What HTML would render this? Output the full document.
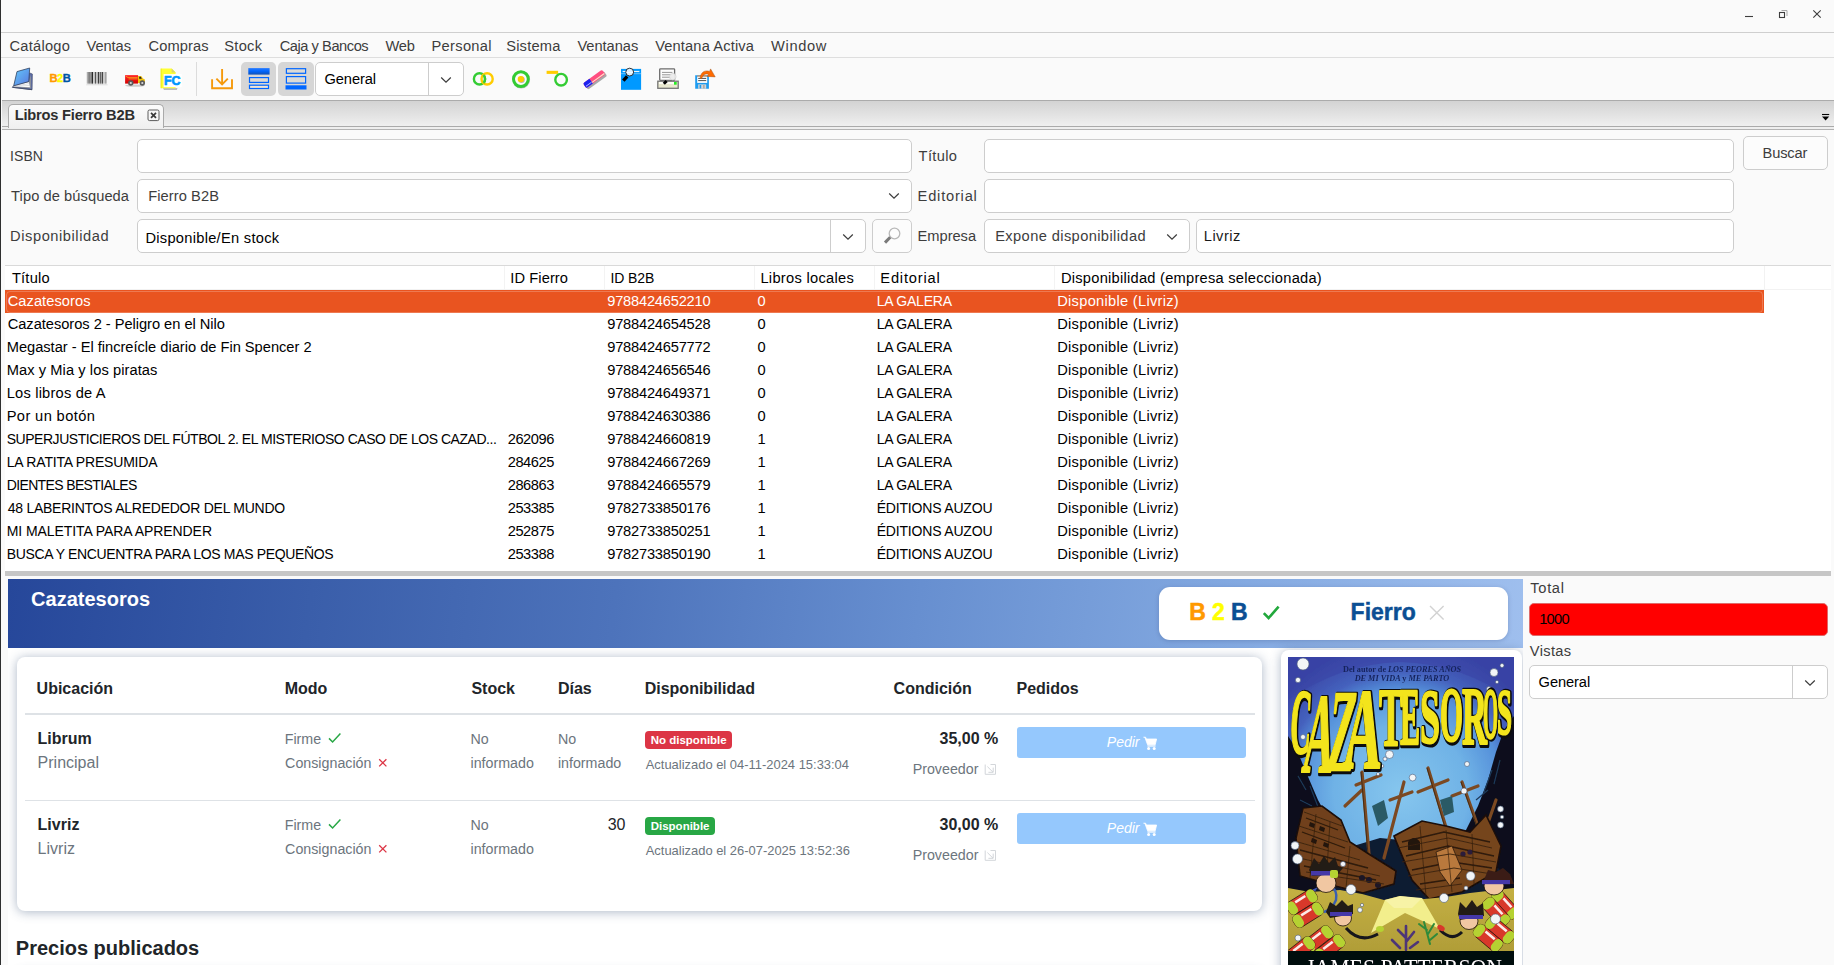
<!DOCTYPE html>
<html><head><meta charset="utf-8"><title>Libros Fierro B2B</title>
<style>
*{box-sizing:border-box;margin:0;padding:0}
html,body{width:1834px;height:965px;overflow:hidden;background:#fafafa;font-family:"Liberation Sans",sans-serif}
#app{position:relative;width:1834px;height:965px;overflow:hidden;background:#fafafa}
.a{position:absolute}
.t{position:absolute;white-space:nowrap;line-height:20px;height:20px}
.inp{position:absolute;background:#fff;border:1px solid #cdcdcd;border-radius:5px}
.hl{position:absolute;height:1px}
svg{position:absolute;overflow:visible}
.w{position:absolute;white-space:nowrap;font-family:"Liberation Sans",sans-serif}
</style></head><body><div id="app">
<div class="hl" style="left:0;top:32px;width:1834px;background:#cfcfcf"></div>
<div class="hl" style="left:0;top:57px;width:1834px;background:#dedede"></div>
<svg style="left:1740px;top:6px" width="90" height="16" viewBox="1740 6 90 16"><path d="M1745 16.5 H1753" stroke="#3d3d3d" stroke-width="1.1"/><path d="M1781.5 10.5 H1787 V16" fill="none" stroke="#a8a8a8" stroke-width="1"/><rect x="1779.5" y="12.5" width="5" height="5" fill="#fafafa" stroke="#3d3d3d" stroke-width="1.1"/><path d="M1813.3 10.3 L1820.7 17.7 M1820.7 10.3 L1813.3 17.7" stroke="#3d3d3d" stroke-width="1.1"/></svg>
<div class="a" style="left:196px;top:62px;width:1px;height:34px;background:#dcdcdc"></div>
<div class="a" style="left:241px;top:62px;width:35px;height:34px;background:#d6d6d6;border-radius:5px"></div>
<div class="a" style="left:278px;top:62px;width:36px;height:34px;background:#d6d6d6;border-radius:5px"></div>
<div class="inp" style="left:315px;top:62px;width:149px;height:34px"></div>
<div class="a" style="left:428px;top:63px;width:1px;height:32px;background:#cdcdcd"></div>
<svg style="left:440px;top:76px" width="12" height="8" viewBox="0 0 12 8"><path d="M1.2 1.5 L6 6.2 L10.8 1.5" fill="none" stroke="#3d3d3d" stroke-width="1.2"/></svg>
<svg style="left:0;top:60px" width="740" height="40" viewBox="0 60 740 40"><defs><linearGradient id="bk" x1="0" y1="0" x2="1" y2="1"><stop offset="0" stop-color="#62cafc"/><stop offset="1" stop-color="#5a78de"/></linearGradient><linearGradient id="bar1" x1="0" y1="0" x2="0" y2="1"><stop offset="0" stop-color="#2a7cff"/><stop offset="0.45" stop-color="#0066ff"/><stop offset="1" stop-color="#1150b4"/></linearGradient><linearGradient id="bc" x1="0" y1="0" x2="0" y2="1"><stop offset="0" stop-color="#fff" stop-opacity="0"/><stop offset="0.8" stop-color="#fafafa" stop-opacity="0"/><stop offset="1" stop-color="#fafafa" stop-opacity="0.85"/></linearGradient><linearGradient id="rd" x1="0" y1="0" x2="0" y2="1"><stop offset="0" stop-color="#ff2a2a"/><stop offset="1" stop-color="#d40000"/></linearGradient></defs><path d="M29.9 73 L32.4 74 L32.1 89.7 L12.3 87.3 L13.7 85.7 Z" fill="#5a6aa8" stroke="#3f4a66" stroke-width="0.6"/><path d="M13.9 85.8 L28.8 81.6 L31 74.4 L31.2 88.6 L13 86.9 Z" fill="#8a8f9a"/><path d="M14.5 85.8 L28.8 81.9 L30 87.3 L13.4 86.6 Z" fill="#ffffff"/><path d="M14.3 86 L29.5 83.6 M13.8 86.5 L29.8 85.4" stroke="#b9bcc4" stroke-width="0.5" fill="none"/><path d="M17 71.6 L29.7 68 L28.8 81.6 L13.7 85.8 Z" fill="url(#bk)" stroke="#34435f" stroke-width="0.8" stroke-linejoin="round"/><path d="M12.4 87.3 L32 89.7" stroke="#3f4a66" stroke-width="0.9"/><text x="49.4" y="81.8" font-family="Liberation Sans, sans-serif" font-weight="bold" font-size="11.2" letter-spacing="-0.45" stroke-width="0.35"><tspan fill="#ff9900" stroke="#ff9900">B</tspan><tspan fill="#ffff00" stroke="#ffff00">2</tspan><tspan fill="#0055a4" stroke="#0055a4">B</tspan></text><rect x="86.8" y="72" width="1.0" height="12.3" fill="#9a9a9a"/><rect x="88.4" y="72" width="1.3" height="12.3" fill="#4a4a4a"/><rect x="90.2" y="72" width="0.8" height="12.3" fill="#7a7a7a"/><rect x="91.4" y="72" width="1.6" height="12.3" fill="#2a2a2a"/><rect x="93.6" y="72" width="0.8" height="12.3" fill="#8a8a8a"/><rect x="94.9" y="72" width="1.2" height="12.3" fill="#555"/><rect x="96.6" y="72" width="0.7" height="12.3" fill="#8a8a8a"/><rect x="97.8" y="72" width="1.5" height="12.3" fill="#3a3a3a"/><rect x="99.8" y="72" width="1.2" height="12.3" fill="#666"/><rect x="101.5" y="72" width="1.6" height="12.3" fill="#444"/><rect x="103.6" y="72" width="0.9" height="12.3" fill="#999"/><rect x="105.0" y="72" width="1.6" height="12.3" fill="#a5a5a5"/><rect x="86" y="72" width="22" height="13" fill="url(#bc)"/><path d="M86.2 84.8 H107.6" stroke="#cfcfcf" stroke-width="0.6"/><ellipse cx="135" cy="85.6" rx="10" ry="1.2" fill="#000" opacity="0.18"/><rect x="125.1" y="75.1" width="13" height="8.5" fill="url(#rd)"/><path d="M126 76.2 L128 77.6 H137.6 M128.6 78.9 H137.6" stroke="#ffd21a" stroke-width="0.6" fill="none"/><path d="M138 76 L141.2 76 L143 78.6 L144.9 79.6 L144.9 83.1 L138 83.1 Z" fill="#f2c20c"/><path d="M139.2 76.8 L140.8 76.8 L141.8 78.8 L139.2 78.8 Z" fill="#222"/><circle cx="130.8" cy="83" r="2.7" fill="#5a5a5a"/><circle cx="130.8" cy="83" r="1.1" fill="#d8d8d8"/><circle cx="142.3" cy="83" r="2.7" fill="#5a5a5a"/><circle cx="142.3" cy="83" r="1.1" fill="#d8d8d8"/><path d="M163 88.4 H177.5 L176.8 89.6 H164 Z" fill="#555" opacity="0.75"/><path d="M161 68.6 H171.6 L175.6 72.6 V88.2 H161 Z" fill="#ffff33"/><path d="M171.6 68.6 L175.6 72.6 H171.6 Z" fill="#d9d66a"/><path d="M161 68.6 V88.2" stroke="#e6e600" stroke-width="0.8"/><rect x="163.6" y="74.1" width="18.2" height="13.1" fill="#fff"/><text x="163.9" y="85.3" font-family="Liberation Sans, sans-serif" font-weight="bold" font-size="12.4" fill="#0096ff" stroke="#0096ff" stroke-width="0.65" letter-spacing="0.1">FC</text><path d="M222.1 69 V84.2 M216.4 78.6 L222.1 84.4 L227.8 78.6 M212.1 79.2 V88.2 H232 V79.2" fill="none" stroke="#f5990b" stroke-width="1.9"/><rect x="248.3" y="68.1" width="21.3" height="6.5" fill="url(#bar1)"/><rect x="249.5" y="77.6" width="19" height="4.8" fill="#dcdad6" stroke="#0066ff" stroke-width="1.2"/><rect x="249.5" y="85.2" width="19" height="3.3" fill="#f3e6d3" stroke="#0066ff" stroke-width="1.2"/><rect x="286.4" y="68.7" width="19.2" height="4.6" fill="#dcdad6" stroke="#0066ff" stroke-width="1.2"/><rect x="286.4" y="76.6" width="19.2" height="6.5" fill="#dcdad6" stroke="#0066ff" stroke-width="1.2"/><rect x="285.5" y="85.3" width="21" height="4.2" fill="#0066ff"/><circle cx="479.5" cy="78.9" r="5.6" fill="none" stroke="#33cc33" stroke-width="2.4"/><circle cx="487.1" cy="78.9" r="5.6" fill="none" stroke="#ffcc00" stroke-width="2.4"/><path d="M 483.3 74.8 A 5.6 5.6 0 0 1 483.3 83" fill="none" stroke="#33cc33" stroke-width="2.4" opacity="0.8"/><circle cx="521.2" cy="79.6" r="7.4" fill="none" stroke="#888" stroke-width="3" opacity="0.5"/><circle cx="520.9" cy="79.1" r="7.4" fill="#fbfbfb" stroke="#33cc33" stroke-width="3"/><circle cx="521.6" cy="79.8" r="3.2" fill="#888" opacity="0.6"/><circle cx="520.9" cy="79.1" r="3.2" fill="#ffcc00"/><rect x="546.6" y="70.8" width="11.5" height="3.1" fill="#ffcc00"/><circle cx="561.1" cy="79.7" r="5.8" fill="#fbfbfb" stroke="#33cc33" stroke-width="2.4"/><g transform="rotate(-36 594.2 78.9)"><rect x="582.4" y="77.2" width="23.6" height="5.8" rx="1.5" fill="#444" opacity="0.45" transform="translate(0.5 1.1)"/><rect x="582.4" y="76" width="23.6" height="5.8" rx="1.6" fill="#ff4f80"/><rect x="590" y="79.9" width="15.6" height="1.1" fill="#ffe6c8"/><path d="M584 76 H590.4 V81.8 H584 A1.6 1.6 0 0 1 582.4 80.2 V77.6 A1.6 1.6 0 0 1 584 76 Z" fill="#1c22f0"/><path d="M583.2 80 H590.2" stroke="#dfe6ff" stroke-width="0.7"/></g><rect x="621" y="68.9" width="20.1" height="20.9" fill="#0099ff"/><path d="M622.6 71.5 H639.4" stroke="#ffffff" stroke-width="1.2" opacity="0.9"/><path d="M621 73.7 H641.1" stroke="#8fd2ff" stroke-width="0.7"/><path d="M627.2 76.4 L623.3 80.6" stroke="#000" stroke-width="3.4"/><circle cx="629.7" cy="72.1" r="3.9" fill="#d9efff" stroke="#1a1a1a" stroke-width="0.9"/><path d="M626.4 72.4 H633" stroke="#ffffff" stroke-width="0.9"/><rect x="659.7" y="68.8" width="14.9" height="11.6" rx="0.8" fill="#fdfdfd" stroke="#6c6c6c" stroke-width="1.3"/><path d="M662 72.4 H672.4 M662 74.8 H672.4 M662 77.2 H672.4" stroke="#6a6a6a" stroke-width="0.7"/><rect x="657.8" y="81.2" width="20.4" height="7.1" fill="#e9e9cf" stroke="#757575" stroke-width="1.3"/><rect x="659" y="82" width="15" height="2" fill="#fcfcf4"/><rect x="674" y="82" width="2.7" height="2.7" fill="#22ee22"/><circle cx="672.8" cy="76.7" r="3.3" fill="#ececec" stroke="#d0d0d0" stroke-width="0.7" opacity="0.95"/><path d="M666.6 81 L663.8 83.8" stroke="#000" stroke-width="3"/><path d="M695.2 75.2 H707.6 L708.9 76.5 V88.8 H695.2 Z" fill="#1e9cf0"/><rect x="697.2" y="75.6" width="10" height="1.1" fill="#ff7a1a"/><rect x="697.2" y="76.7" width="10" height="6.2" fill="#ffffff"/><path d="M698.2 78.4 H706.2 M698.2 80.6 H706.2" stroke="#222" stroke-width="0.8"/><rect x="698.2" y="84.4" width="8" height="4.4" fill="#d6d6d6"/><rect x="699.6" y="85" width="1.6" height="3.4" fill="#1e9cf0"/><rect x="703.3" y="85" width="1.2" height="3.4" fill="#9a9a9a"/><path d="M700.2 78.4 C700.4 73 704 69.6 709.6 71.4 L710.6 68.9 L715.2 76.9 L707.2 76.4 L708.4 74.3 C705.6 73.2 702.6 74.6 701.8 78.6 Z" fill="#ff6a00" stroke="#a2561e" stroke-width="0.5"/></svg>
<div class="a" style="left:2px;top:100px;width:1832px;height:27px;background:linear-gradient(#d2d2d2,#f0f0f0)"></div>
<div class="hl" style="left:2px;top:100px;width:1832px;background:#ababab"></div>
<div class="a" style="left:2px;top:126px;width:1832px;height:4px;background:#eeeeee;border-top:1px solid #aaaaaa;border-bottom:1px solid #b2b2b2"></div>
<div class="a" style="left:7.5px;top:104px;width:156px;height:24px;background:linear-gradient(#fbfbfb,#f0f0f0);border:1px solid #aaaaaa;border-bottom:none;border-radius:5px 5px 0 0"></div>
<svg style="left:147px;top:109px" width="14" height="13" viewBox="0 0 14 13"><rect x="1" y="1" width="11" height="10.6" rx="1.5" fill="#f6f6f6" stroke="#4a4a4a" stroke-width="0.9"/><path d="M4 3.8 L9 8.8 M9 3.8 L4 8.8" stroke="#3a3a3a" stroke-width="1.7"/></svg>
<svg style="left:1820px;top:112px" width="12" height="10" viewBox="0 0 12 10"><path d="M2 2.5 H9.2" stroke="#000" stroke-width="1.1"/><path d="M2 4.4 H9.2 L5.6 8.4 Z" fill="#000"/></svg>
<div class="inp" style="left:137px;top:139px;width:775px;height:34px"></div>
<div class="inp" style="left:137px;top:179px;width:775px;height:34px"></div>
<div class="inp" style="left:137px;top:219px;width:729px;height:34px"></div>
<div class="a" style="left:830px;top:220px;width:1px;height:32px;background:#cdcdcd"></div>
<div class="inp" style="left:872px;top:219px;width:40px;height:34px;background:#fcfcfc"></div>
<div class="inp" style="left:984px;top:139px;width:750px;height:34px"></div>
<div class="inp" style="left:984px;top:179px;width:750px;height:34px"></div>
<div class="inp" style="left:984px;top:219px;width:206px;height:34px"></div>
<div class="inp" style="left:1196px;top:219px;width:538px;height:34px"></div>
<div class="inp" style="left:1743px;top:136px;width:85px;height:34px;background:#fcfcfc"></div>
<svg style="left:887.5px;top:192px" width="12" height="8" viewBox="0 0 12 8"><path d="M1.2 1.5 L6 6.2 L10.8 1.5" fill="none" stroke="#3d3d3d" stroke-width="1.2"/></svg>
<svg style="left:842px;top:232.5px" width="12" height="8" viewBox="0 0 12 8"><path d="M1.2 1.5 L6 6.2 L10.8 1.5" fill="none" stroke="#3d3d3d" stroke-width="1.2"/></svg>
<svg style="left:1165.5px;top:232.5px" width="12" height="8" viewBox="0 0 12 8"><path d="M1.2 1.5 L6 6.2 L10.8 1.5" fill="none" stroke="#3d3d3d" stroke-width="1.2"/></svg>
<svg style="left:880px;top:225px" width="24" height="22" viewBox="0 0 24 22"><circle cx="14.5" cy="8.5" r="5.3" fill="#fdfdfd" stroke="#b9b9b9" stroke-width="1.3"/><path d="M10.2 12.2 L5 17.6" stroke="#7a7a7a" stroke-width="3" /></svg>
<div class="a" style="left:5px;top:265px;width:1826px;height:306px;background:#fff"></div>
<div class="hl" style="left:5px;top:265px;width:1826px;background:#d9d9d9"></div>
<div class="hl" style="left:5px;top:289px;width:1826px;background:#f2f2f2"></div>
<div class="a" style="left:1764px;top:266px;width:1px;height:23px;background:#f2f2f2"></div>
<div class="a" style="left:504px;top:266px;width:1px;height:23px;background:#f3f3f3"></div>
<div class="a" style="left:604px;top:266px;width:1px;height:23px;background:#f3f3f3"></div>
<div class="a" style="left:754px;top:266px;width:1px;height:23px;background:#f3f3f3"></div>
<div class="a" style="left:874px;top:266px;width:1px;height:23px;background:#f3f3f3"></div>
<div class="a" style="left:1054px;top:266px;width:1px;height:23px;background:#f3f3f3"></div>
<div class="a" style="left:5px;top:290px;width:1759px;height:23px;background:#e95420"></div>
<div class="a" style="left:6px;top:290.5px;width:1757px;height:22px;border:1px solid rgba(255,255,255,0.22);border-radius:4px"></div>
<div class="a" style="left:5px;top:566px;width:1826px;height:5px;overflow:hidden"><span class="t" style="left:873px;top:3.6px;font-size:14.667px;color:#000">É</span><span class="t" style="left:1053px;top:3.6px;font-size:14.667px;color:#000;letter-spacing:-0.2px">Disponible (Livriz)</span></div>
<div class="a" style="left:5px;top:571px;width:1826px;height:4.6px;background:#c6c6c6"></div>
<div class="a" style="left:8px;top:579px;width:1515px;height:386px;background:#fff;overflow:hidden">
<div class="a" style="left:0;top:0;width:1515px;height:69px;background:linear-gradient(97deg,#26479a 0%,#3a5eaa 20%,#4d73bb 40%,#678fd0 60%,#82a8e0 80%,#9fbfee 100%)"></div>
<div class="a" style="left:1151.2px;top:8px;width:349px;height:53px;background:#fff;border-radius:11px;box-shadow:0 1px 4px rgba(40,60,110,0.25)"></div>
<div class="a" style="left:9px;top:78px;width:1245px;height:254px;background:#fff;border-radius:8px;box-shadow:0 1px 11px rgba(55,80,120,0.42)"></div>
<div class="a" style="left:9px;top:393px;width:1245px;height:100px;background:#fff;border-radius:8px;box-shadow:0 1px 11px rgba(55,80,120,0.42)"></div>
<div class="a" style="left:1272.5px;top:71px;width:241.5px;height:400px;background:#fff;border-radius:8px;box-shadow:0 1px 11px rgba(55,80,120,0.42)"></div>
</div>
<div class="a" style="left:25px;top:713px;width:1230px;height:2px;background:#dee2e6"></div>
<div class="a" style="left:25px;top:800px;width:1230px;height:1px;background:#dee2e6"></div>
<svg style="left:328px;top:732px" width="14" height="12" viewBox="0 0 14 12"><path d="M1 6.4 L4.6 10 L12.4 1.6" fill="none" stroke="#28a745" stroke-width="1.5"/></svg>
<svg style="left:378px;top:758px" width="10" height="10" viewBox="0 0 10 10"><path d="M1.2 1.2 L8.4 8.4 M8.4 1.2 L1.2 8.4" fill="none" stroke="#dc3545" stroke-width="1.3"/></svg>
<svg style="left:984px;top:763px" width="13" height="13" viewBox="0 0 13 13"><path d="M1.2 1.5 V11.3 H11.5 V1.5 H6.5" fill="none" stroke="#d3d6da" stroke-width="1"/><path d="M3.4 3.6 L9 9.2 M9.2 4.6 V9.3 H4.4" fill="none" stroke="#d3d6da" stroke-width="1"/></svg>
<div class="a" style="left:1017px;top:727px;width:229px;height:31px;background:#95c8fd;border-radius:3px"></div>
<svg style="left:1143px;top:735.5px" width="15" height="15" viewBox="0 0 15 15"><path d="M0.4 1.2 H2.6 L3.4 3 H13.6 L12.2 8.8 H4.6 L2.2 2.2" fill="#fff" stroke="#fff" stroke-width="0.8" stroke-linejoin="round"/><path d="M4.4 10 H12.6" stroke="#fff" stroke-width="1.2"/><circle cx="5.6" cy="12.6" r="1.5" fill="#fff"/><circle cx="11.2" cy="12.6" r="1.5" fill="#fff"/></svg>
<svg style="left:328px;top:818px" width="14" height="12" viewBox="0 0 14 12"><path d="M1 6.4 L4.6 10 L12.4 1.6" fill="none" stroke="#28a745" stroke-width="1.5"/></svg>
<svg style="left:378px;top:844px" width="10" height="10" viewBox="0 0 10 10"><path d="M1.2 1.2 L8.4 8.4 M8.4 1.2 L1.2 8.4" fill="none" stroke="#dc3545" stroke-width="1.3"/></svg>
<svg style="left:984px;top:849px" width="13" height="13" viewBox="0 0 13 13"><path d="M1.2 1.5 V11.3 H11.5 V1.5 H6.5" fill="none" stroke="#d3d6da" stroke-width="1"/><path d="M3.4 3.6 L9 9.2 M9.2 4.6 V9.3 H4.4" fill="none" stroke="#d3d6da" stroke-width="1"/></svg>
<div class="a" style="left:1017px;top:813px;width:229px;height:31px;background:#95c8fd;border-radius:3px"></div>
<svg style="left:1143px;top:821.5px" width="15" height="15" viewBox="0 0 15 15"><path d="M0.4 1.2 H2.6 L3.4 3 H13.6 L12.2 8.8 H4.6 L2.2 2.2" fill="#fff" stroke="#fff" stroke-width="0.8" stroke-linejoin="round"/><path d="M4.4 10 H12.6" stroke="#fff" stroke-width="1.2"/><circle cx="5.6" cy="12.6" r="1.5" fill="#fff"/><circle cx="11.2" cy="12.6" r="1.5" fill="#fff"/></svg>
<div class="a" style="left:645.2px;top:731px;width:86.8px;height:18px;background:#dc3545;border-radius:4px"></div>
<div class="a" style="left:645.2px;top:817px;width:70px;height:18px;background:#28a745;border-radius:4px"></div>
<svg style="left:1262px;top:604px" width="20" height="17" viewBox="0 0 20 17"><path d="M1.8 9.2 L6.6 14 L16.6 2.6" fill="none" stroke="#22a83c" stroke-width="2.6"/></svg>
<svg style="left:1429px;top:605px" width="16" height="16" viewBox="0 0 16 16"><path d="M1 1 L14.6 14.6 M14.6 1 L1 14.6" fill="none" stroke="#d2d2d2" stroke-width="1.4"/></svg>
<svg style="left:1288px;top:657px" width="226" height="308" viewBox="1288 657 226 308"><defs><radialGradient id="sea" cx="1401" cy="792" r="150" gradientUnits="userSpaceOnUse"><stop offset="0" stop-color="#86c6ee"/><stop offset="0.45" stop-color="#6fb2e6"/><stop offset="0.68" stop-color="#5590da"/><stop offset="0.8" stop-color="#4461bd"/><stop offset="1" stop-color="#3a44a4"/></radialGradient><linearGradient id="sand" x1="0" y1="0" x2="0" y2="1"><stop offset="0" stop-color="#c4b043"/><stop offset="1" stop-color="#b09d38"/></linearGradient><clipPath id="cv"><rect x="1288" y="657" width="226" height="308"/></clipPath><filter id="soft" x="-5%" y="-5%" width="110%" height="110%"><feGaussianBlur stdDeviation="0.45"/></filter></defs><g clip-path="url(#cv)" filter="url(#soft)"><rect x="1288" y="657" width="226" height="308" fill="#0b0e1d"/><rect x="1288" y="657" width="226" height="240" fill="url(#sea)"/><path d="M1288 700 Q1340 664 1400 662 Q1462 664 1514 700 L1514 657 L1288 657 Z" fill="#3944a6" opacity="0.55"/><path d="M1288 736 L1296 748 L1306 772 L1318 800 L1330 822 L1345 846 L1358 870 L1288 900 Z" fill="#0b0f1c"/><path d="M1514 716 L1504 730 L1496 752 L1488 780 L1478 806 L1466 830 L1455 860 L1514 900 Z" fill="#0b0f1c"/><path d="M1298 776 L1306 790 M1300 800 L1312 806 M1310 786 L1320 812" stroke="#1f3a5a" stroke-width="1.2" fill="none"/><path d="M1492 770 L1484 792 M1500 760 L1494 784 M1476 800 L1488 790" stroke="#1f3a5a" stroke-width="1.2" fill="none"/><path d="M1340 850 L1380 838 L1420 842 L1470 840 L1500 870 L1500 900 L1310 900 Z" fill="#101a33"/><g stroke="#7b4a22" stroke-width="3.2" stroke-linecap="round" fill="none"><path d="M1362 772 L1370 866"/><path d="M1356 785 L1381 775"/><path d="M1345 806 L1362 790"/><path d="M1404 782 L1384 858"/><path d="M1390 800 L1412 792"/><path d="M1428 768 L1448 834"/><path d="M1418 792 L1448 780"/><path d="M1462 782 L1480 832"/><path d="M1452 796 L1478 786"/><path d="M1496 800 L1482 840"/></g><g stroke="#3a2413" stroke-width="0.8" fill="none"><path d="M1361 772 L1369 866"/><path d="M1427 768 L1447 834"/><path d="M1461 782 L1479 832"/></g><path d="M1372 806 L1384 800 L1388 818 L1378 826 Z M1440 800 L1452 796 L1454 812 L1444 816 Z" fill="#2c5a66"/><path d="M1303 808 L1322 806 L1341 820 L1350 842 L1372 856 L1396 871 L1394 884 L1363 893 L1335 886 L1300 876 L1296 838 Z" fill="#6f401a" stroke="#1a0f07" stroke-width="1.6"/><path d="M1306 818 L1338 830 M1302 832 L1345 848 M1300 850 L1368 868 M1304 866 L1376 880" stroke="#2e1a0a" stroke-width="1.3" fill="none"/><path d="M1310 822 l5 2 l-1 4 l-5 -2 Z M1320 826 l5 2 l-1 4 l-5 -2 Z M1312 838 l5 2 l-1 4 l-5 -2 Z M1324 842 l5 2 l-1 4 l-5 -2 Z" fill="#231308"/><path d="M1394 836 L1422 821 L1446 826 L1470 832 L1486 815 L1501 846 L1496 872 L1462 892 L1429 899 L1412 880 Z" fill="#75441b" stroke="#1a0f07" stroke-width="1.6"/><path d="M1402 842 L1444 832 L1490 842 M1406 856 L1448 846 L1494 856 M1412 870 L1452 862 L1492 868 M1420 884 L1460 878" stroke="#2e1a0a" stroke-width="1.3" fill="none"/><path d="M1408 842 q6 -8 12 0 v8 h-12 Z" fill="#231308"/><path d="M1436 852 L1452 846 L1462 870 L1450 886 L1440 872 Z" fill="#b9793d" stroke="#2b190c" stroke-width="0.8"/><circle cx="1463" cy="854" r="2.6" fill="#2a1b3a"/><circle cx="1470" cy="852" r="2.6" fill="#2a1b3a"/><circle cx="1362" cy="878" r="3" fill="#1d1626"/><circle cx="1369" cy="880" r="3" fill="#1d1626"/><circle cx="1378" cy="885" r="3" fill="#1d1626"/><path d="M1304 812 L1342 826 M1299 826 L1348 842 M1298 842 L1360 860 M1299 858 L1380 876 M1306 872 L1384 884 M1398 848 L1448 838 L1492 848 M1402 862 L1450 854 L1496 862 M1408 876 L1454 868 L1492 874 M1416 890 L1462 884" stroke="#3a220e" stroke-width="0.9" fill="none"/><path d="M1330 822 L1326 884 M1316 814 L1310 878 M1350 846 L1346 888 M1420 826 L1426 896 M1446 830 L1452 892 M1472 834 L1474 884" stroke="#2e1a0a" stroke-width="0.8" fill="none" opacity="0.8"/><path d="M1288 888 L1310 892 L1340 890 L1362 894 L1384 900 L1400 896 L1424 899 L1446 897 L1470 893 L1496 890 L1514 888 L1514 952 L1288 952 Z" fill="url(#sand)"/><path d="M1371 933 L1385 900 L1422 898 L1440 929 L1405 913 Z" fill="#f2ee8c"/><path d="M1385 900 L1400 896 L1422 898 L1412 908 L1394 908 Z" fill="#f7f3a6"/><path d="M1406 950 L1406 926 M1406 938 L1398 930 M1406 942 L1414 932 M1400 948 L1392 940 M1410 948 L1418 942" stroke="#4e3478" stroke-width="2.6" stroke-linecap="round" fill="none"/><path d="M1430 944 L1424 922 M1428 934 L1434 924 M1427 930 L1419 924 M1430 940 L1437 934" stroke="#2f8a3a" stroke-width="2" stroke-linecap="round" fill="none"/><g transform="translate(1302 902) rotate(-32)"><rect x="-16" y="-7" width="32" height="14" rx="5" fill="#d8372a" stroke="#1a1010" stroke-width="0.7"/><rect x="-16" y="-7" width="9" height="14" rx="4.5" fill="#b5d233"/><rect x="7" y="-7" width="9" height="14" rx="4.5" fill="#b5d233"/><rect x="-6" y="-4.6" width="12" height="2.6" fill="#ffffff" opacity="0.9"/></g><g transform="translate(1308 915) rotate(-32)"><rect x="-16" y="-7" width="32" height="14" rx="5" fill="#d8372a" stroke="#1a1010" stroke-width="0.7"/><rect x="-16" y="-7" width="9" height="14" rx="4.5" fill="#b5d233"/><rect x="7" y="-7" width="9" height="14" rx="4.5" fill="#b5d233"/><rect x="-6" y="-4.6" width="12" height="2.6" fill="#ffffff" opacity="0.9"/></g><path d="M1330 886 q8 4 6 14 q-4 10 -12 12" stroke="#3b5fb0" stroke-width="2.4" fill="none"/><ellipse cx="1326" cy="883" rx="10" ry="9.5" fill="#f1c7a2" stroke="#1c120a" stroke-width="0.8"/><path d="M1309 870 L1314 858 L1319 864 L1324 856 L1329 863 L1335 857 L1338 866 L1343 868 L1338 874 L1312 876 Z" fill="#241a12"/><rect x="1311" y="871" width="26" height="4.5" fill="#4438a8"/><rect x="1330" y="870" width="8" height="8" rx="2" fill="#b5d233"/><g transform="translate(1318 939) rotate(-38)"><rect x="-16" y="-7" width="32" height="14" rx="5" fill="#d8372a" stroke="#1a1010" stroke-width="0.7"/><rect x="-16" y="-7" width="9" height="14" rx="4.5" fill="#b5d233"/><rect x="7" y="-7" width="9" height="14" rx="4.5" fill="#b5d233"/><rect x="-6" y="-4.6" width="12" height="2.6" fill="#ffffff" opacity="0.9"/></g><g transform="translate(1330 948) rotate(-38)"><rect x="-16" y="-7" width="32" height="14" rx="5" fill="#d8372a" stroke="#1a1010" stroke-width="0.7"/><rect x="-16" y="-7" width="9" height="14" rx="4.5" fill="#b5d233"/><rect x="7" y="-7" width="9" height="14" rx="4.5" fill="#b5d233"/><rect x="-6" y="-4.6" width="12" height="2.6" fill="#ffffff" opacity="0.9"/></g><g transform="translate(1300 950) rotate(-38)"><rect x="-16" y="-7" width="32" height="14" rx="5" fill="#d8372a" stroke="#1a1010" stroke-width="0.7"/><rect x="-16" y="-7" width="9" height="14" rx="4.5" fill="#b5d233"/><rect x="7" y="-7" width="9" height="14" rx="4.5" fill="#b5d233"/><rect x="-6" y="-4.6" width="12" height="2.6" fill="#ffffff" opacity="0.9"/></g><ellipse cx="1343" cy="918" rx="8.5" ry="8" fill="#f1c7a2" stroke="#1c120a" stroke-width="0.8"/><path d="M1326 912 L1330 902 L1336 906 L1342 900 L1348 906 L1353 904 L1353 914 L1330 918 Z" fill="#241a12"/><rect x="1330" y="912" width="22" height="4" fill="#4438a8"/><path d="M1346 928 q14 16 32 6" stroke="#15151c" stroke-width="3" fill="none"/><ellipse cx="1380" cy="929" rx="4" ry="3" fill="#b5d233"/><g transform="translate(1505 905) rotate(48)"><rect x="-16" y="-7" width="32" height="14" rx="5" fill="#d8372a" stroke="#1a1010" stroke-width="0.7"/><rect x="-16" y="-7" width="9" height="14" rx="4.5" fill="#b5d233"/><rect x="7" y="-7" width="9" height="14" rx="4.5" fill="#b5d233"/><rect x="-6" y="-4.6" width="12" height="2.6" fill="#ffffff" opacity="0.9"/></g><g transform="translate(1496 912) rotate(48)"><rect x="-16" y="-7" width="32" height="14" rx="5" fill="#d8372a" stroke="#1a1010" stroke-width="0.7"/><rect x="-16" y="-7" width="9" height="14" rx="4.5" fill="#b5d233"/><rect x="7" y="-7" width="9" height="14" rx="4.5" fill="#b5d233"/><rect x="-6" y="-4.6" width="12" height="2.6" fill="#ffffff" opacity="0.9"/></g><ellipse cx="1494" cy="886" rx="10" ry="9" fill="#f1c7a2" stroke="#1c120a" stroke-width="0.8"/><path d="M1484 880 L1488 870 L1496 872 L1503 868 L1510 874 L1514 884 L1500 884 Z" fill="#3a1f14"/><rect x="1482" y="880" width="28" height="4.2" fill="#4438a8"/><g transform="translate(1488 938) rotate(40)"><rect x="-16" y="-7" width="32" height="14" rx="5" fill="#d8372a" stroke="#1a1010" stroke-width="0.7"/><rect x="-16" y="-7" width="9" height="14" rx="4.5" fill="#b5d233"/><rect x="7" y="-7" width="9" height="14" rx="4.5" fill="#b5d233"/><rect x="-6" y="-4.6" width="12" height="2.6" fill="#ffffff" opacity="0.9"/></g><g transform="translate(1500 930) rotate(40)"><rect x="-16" y="-7" width="32" height="14" rx="5" fill="#d8372a" stroke="#1a1010" stroke-width="0.7"/><rect x="-16" y="-7" width="9" height="14" rx="4.5" fill="#b5d233"/><rect x="7" y="-7" width="9" height="14" rx="4.5" fill="#b5d233"/><rect x="-6" y="-4.6" width="12" height="2.6" fill="#ffffff" opacity="0.9"/></g><ellipse cx="1469" cy="921" rx="9" ry="8.5" fill="#f1c7a2" stroke="#1c120a" stroke-width="0.8"/><path d="M1458 914 L1460 902 L1466 908 L1472 900 L1477 907 L1483 903 L1484 916 L1460 920 Z" fill="#241a12"/><rect x="1459" y="915" width="24" height="4" fill="#4438a8"/><path d="M1462 932 q-10 10 -22 -2" stroke="#15151c" stroke-width="3" fill="none"/><ellipse cx="1441" cy="928" rx="4" ry="2.6" fill="#d8372a" transform="rotate(30 1441 928)"/><rect x="1288" y="951" width="226" height="20" fill="#06070d"/><text x="1306" y="974.5" font-family="Liberation Serif, serif" font-size="24" fill="#fff" textLength="196" lengthAdjust="spacingAndGlyphs">JAMES PATTERSON</text><circle cx="1303" cy="664" r="6" fill="#f2f5f7" stroke="#4a5a78" stroke-width="0.6"/><circle cx="1298" cy="680" r="2.6" fill="#f2f5f7" stroke="#4a5a78" stroke-width="0.6"/><circle cx="1494" cy="672.5" r="4" fill="#f2f5f7" stroke="#4a5a78" stroke-width="0.6"/><circle cx="1502" cy="665.5" r="2" fill="#f2f5f7" stroke="#4a5a78" stroke-width="0.6"/><circle cx="1489" cy="689" r="2.5" fill="#f2f5f7" stroke="#4a5a78" stroke-width="0.6"/><circle cx="1497" cy="682" r="1.6" fill="#f2f5f7" stroke="#4a5a78" stroke-width="0.6"/><circle cx="1351" cy="707" r="2.5" fill="#f2f5f7" stroke="#4a5a78" stroke-width="0.6"/><circle cx="1389.5" cy="754.5" r="4" fill="#f2f5f7" stroke="#4a5a78" stroke-width="0.6"/><circle cx="1385" cy="759" r="2" fill="#f2f5f7" stroke="#4a5a78" stroke-width="0.6"/><circle cx="1412.6" cy="777.6" r="3.4" fill="#f2f5f7" stroke="#4a5a78" stroke-width="0.6"/><circle cx="1303" cy="737" r="2.5" fill="#f2f5f7" stroke="#4a5a78" stroke-width="0.6"/><circle cx="1467" cy="764" r="2.5" fill="#f2f5f7" stroke="#4a5a78" stroke-width="0.6"/><circle cx="1464" cy="791" r="3" fill="#f2f5f7" stroke="#4a5a78" stroke-width="0.6"/><circle cx="1382" cy="766" r="1.8" fill="#f2f5f7" stroke="#4a5a78" stroke-width="0.6"/><circle cx="1378" cy="774" r="1.6" fill="#f2f5f7" stroke="#4a5a78" stroke-width="0.6"/><circle cx="1295" cy="845.6" r="4" fill="#f2f5f7" stroke="#4a5a78" stroke-width="0.6"/><circle cx="1297.5" cy="859" r="5" fill="#f2f5f7" stroke="#4a5a78" stroke-width="0.6"/><circle cx="1351" cy="889.5" r="5" fill="#f2f5f7" stroke="#4a5a78" stroke-width="0.6"/><circle cx="1444" cy="898" r="4.5" fill="#f2f5f7" stroke="#4a5a78" stroke-width="0.6"/><circle cx="1470.6" cy="876" r="4.5" fill="#f2f5f7" stroke="#4a5a78" stroke-width="0.6"/><circle cx="1495.5" cy="919" r="5" fill="#f2f5f7" stroke="#4a5a78" stroke-width="0.6"/><circle cx="1500.5" cy="809" r="3" fill="#f2f5f7" stroke="#4a5a78" stroke-width="0.6"/><circle cx="1500.5" cy="825" r="3" fill="#f2f5f7" stroke="#4a5a78" stroke-width="0.6"/><circle cx="1502" cy="817" r="1.8" fill="#f2f5f7" stroke="#4a5a78" stroke-width="0.6"/><circle cx="1343" cy="864" r="2.6" fill="#f2f5f7" stroke="#4a5a78" stroke-width="0.6"/><circle cx="1360" cy="910" r="2.4" fill="#f2f5f7" stroke="#4a5a78" stroke-width="0.6"/><circle cx="1362" cy="905" r="1.6" fill="#f2f5f7" stroke="#4a5a78" stroke-width="0.6"/><circle cx="1466" cy="888" r="2" fill="#f2f5f7" stroke="#4a5a78" stroke-width="0.6"/><circle cx="1298" cy="938" r="3" fill="#f2f5f7" stroke="#4a5a78" stroke-width="0.6"/><text x="1402" y="672.2" text-anchor="middle" font-family="Liberation Serif, serif" font-weight="bold" font-size="8.2" fill="#16235c">Del autor de <tspan font-style="italic">LOS PEORES AÑOS</tspan></text><text x="1402" y="681.2" text-anchor="middle" font-family="Liberation Serif, serif" font-weight="bold" font-style="italic" font-size="8.2" fill="#16235c">DE MI VIDA <tspan font-style="normal">y</tspan> ME PARTO</text><text transform="translate(1289.8 753.9) skewX(-3) scale(0.2909 0.9215)" font-family="Liberation Serif, serif" font-weight="bold" font-size="100" fill="#0a0a0a" stroke="#0a0a0a" stroke-width="4.8" vector-effect="non-scaling-stroke" stroke-linejoin="round">C</text><text transform="translate(1301.8 772.9) skewX(-6) scale(0.4155 1.1329)" font-family="Liberation Serif, serif" font-weight="bold" font-size="100" fill="#0a0a0a" stroke="#0a0a0a" stroke-width="4.8" vector-effect="non-scaling-stroke" stroke-linejoin="round">A</text><text transform="translate(1326.8 770.9) skewX(-5) scale(0.4048 1.1631)" font-family="Liberation Serif, serif" font-weight="bold" font-size="100" fill="#0a0a0a" stroke="#0a0a0a" stroke-width="4.8" vector-effect="non-scaling-stroke" stroke-linejoin="round">Z</text><text transform="translate(1342.8 768.9) skewX(-4) scale(0.5263 1.1480)" font-family="Liberation Serif, serif" font-weight="bold" font-size="100" fill="#0a0a0a" stroke="#0a0a0a" stroke-width="4.8" vector-effect="non-scaling-stroke" stroke-linejoin="round">A</text><text transform="translate(1379.8 745.9) skewX(0) scale(0.3598 0.8157)" font-family="Liberation Serif, serif" font-weight="bold" font-size="100" fill="#0a0a0a" stroke="#0a0a0a" stroke-width="4.8" vector-effect="non-scaling-stroke" stroke-linejoin="round">T</text><text transform="translate(1400.8 744.9) skewX(0) scale(0.2999 0.8006)" font-family="Liberation Serif, serif" font-weight="bold" font-size="100" fill="#0a0a0a" stroke="#0a0a0a" stroke-width="4.8" vector-effect="non-scaling-stroke" stroke-linejoin="round">E</text><text transform="translate(1420.8 743.9) skewX(0) scale(0.3597 0.7931)" font-family="Liberation Serif, serif" font-weight="bold" font-size="100" fill="#0a0a0a" stroke="#0a0a0a" stroke-width="4.8" vector-effect="non-scaling-stroke" stroke-linejoin="round">S</text><text transform="translate(1440.8 741.9) skewX(0) scale(0.2956 0.7779)" font-family="Liberation Serif, serif" font-weight="bold" font-size="100" fill="#0a0a0a" stroke="#0a0a0a" stroke-width="4.8" vector-effect="non-scaling-stroke" stroke-linejoin="round">O</text><text transform="translate(1462.8 744.9) skewX(0) scale(0.3463 0.8308)" font-family="Liberation Serif, serif" font-weight="bold" font-size="100" fill="#0a0a0a" stroke="#0a0a0a" stroke-width="4.8" vector-effect="non-scaling-stroke" stroke-linejoin="round">R</text><text transform="translate(1483.8 738.4) skewX(0) scale(0.1928 0.7175)" font-family="Liberation Serif, serif" font-weight="bold" font-size="100" fill="#0a0a0a" stroke="#0a0a0a" stroke-width="4.8" vector-effect="non-scaling-stroke" stroke-linejoin="round">O</text><text transform="translate(1497.8 734.9) skewX(0) scale(0.2698 0.6571)" font-family="Liberation Serif, serif" font-weight="bold" font-size="100" fill="#0a0a0a" stroke="#0a0a0a" stroke-width="4.8" vector-effect="non-scaling-stroke" stroke-linejoin="round">S</text><text transform="translate(1289 753) skewX(-3) scale(0.2909 0.9215)" font-family="Liberation Serif, serif" font-weight="bold" font-size="100" fill="#f3e41c" stroke="#f3e41c" stroke-width="1.7" vector-effect="non-scaling-stroke" stroke-linejoin="round">C</text><text transform="translate(1301 772) skewX(-6) scale(0.4155 1.1329)" font-family="Liberation Serif, serif" font-weight="bold" font-size="100" fill="#f3e41c" stroke="#f3e41c" stroke-width="1.7" vector-effect="non-scaling-stroke" stroke-linejoin="round">A</text><text transform="translate(1326 770) skewX(-5) scale(0.4048 1.1631)" font-family="Liberation Serif, serif" font-weight="bold" font-size="100" fill="#f3e41c" stroke="#f3e41c" stroke-width="1.7" vector-effect="non-scaling-stroke" stroke-linejoin="round">Z</text><text transform="translate(1342 768) skewX(-4) scale(0.5263 1.1480)" font-family="Liberation Serif, serif" font-weight="bold" font-size="100" fill="#f3e41c" stroke="#f3e41c" stroke-width="1.7" vector-effect="non-scaling-stroke" stroke-linejoin="round">A</text><text transform="translate(1379 745) skewX(0) scale(0.3598 0.8157)" font-family="Liberation Serif, serif" font-weight="bold" font-size="100" fill="#f3e41c" stroke="#f3e41c" stroke-width="1.7" vector-effect="non-scaling-stroke" stroke-linejoin="round">T</text><text transform="translate(1400 744) skewX(0) scale(0.2999 0.8006)" font-family="Liberation Serif, serif" font-weight="bold" font-size="100" fill="#f3e41c" stroke="#f3e41c" stroke-width="1.7" vector-effect="non-scaling-stroke" stroke-linejoin="round">E</text><text transform="translate(1420 743) skewX(0) scale(0.3597 0.7931)" font-family="Liberation Serif, serif" font-weight="bold" font-size="100" fill="#f3e41c" stroke="#f3e41c" stroke-width="1.7" vector-effect="non-scaling-stroke" stroke-linejoin="round">S</text><text transform="translate(1440 741) skewX(0) scale(0.2956 0.7779)" font-family="Liberation Serif, serif" font-weight="bold" font-size="100" fill="#f3e41c" stroke="#f3e41c" stroke-width="1.7" vector-effect="non-scaling-stroke" stroke-linejoin="round">O</text><text transform="translate(1462 744) skewX(0) scale(0.3463 0.8308)" font-family="Liberation Serif, serif" font-weight="bold" font-size="100" fill="#f3e41c" stroke="#f3e41c" stroke-width="1.7" vector-effect="non-scaling-stroke" stroke-linejoin="round">R</text><text transform="translate(1483 737.5) skewX(0) scale(0.1928 0.7175)" font-family="Liberation Serif, serif" font-weight="bold" font-size="100" fill="#f3e41c" stroke="#f3e41c" stroke-width="1.7" vector-effect="non-scaling-stroke" stroke-linejoin="round">O</text><text transform="translate(1497 734) skewX(0) scale(0.2698 0.6571)" font-family="Liberation Serif, serif" font-weight="bold" font-size="100" fill="#f3e41c" stroke="#f3e41c" stroke-width="1.7" vector-effect="non-scaling-stroke" stroke-linejoin="round">S</text></g></svg>
<div class="a" style="left:1523px;top:576px;width:311px;height:389px;background:#fafafa"></div>
<div class="inp" style="left:1529px;top:602.5px;width:299px;height:33px;background:#ff0000;border-color:#e06a6a"></div>
<div class="inp" style="left:1529px;top:665px;width:299px;height:34px"></div>
<div class="a" style="left:1792px;top:666px;width:1px;height:32px;background:#cdcdcd"></div>
<svg style="left:1804px;top:678.5px" width="12" height="8" viewBox="0 0 12 8"><path d="M1.2 1.5 L6 6.2 L10.8 1.5" fill="none" stroke="#3d3d3d" stroke-width="1.2"/></svg>
<span class="t" style="left:9.50px;top:36.00px;font-size:14.667px;color:#3d3d3d;letter-spacing:0.243px;">Catálogo</span>
<span class="t" style="left:86.50px;top:36.00px;font-size:14.667px;color:#3d3d3d;letter-spacing:-0.060px;">Ventas</span>
<span class="t" style="left:148.50px;top:36.00px;font-size:14.667px;color:#3d3d3d;letter-spacing:0.117px;">Compras</span>
<span class="t" style="left:224.20px;top:36.00px;font-size:14.667px;color:#3d3d3d;letter-spacing:0.300px;">Stock</span>
<span class="t" style="left:279.70px;top:36.00px;font-size:14.667px;color:#3d3d3d;letter-spacing:-0.458px;">Caja y Bancos</span>
<span class="t" style="left:385.50px;top:36.00px;font-size:14.667px;color:#3d3d3d;letter-spacing:-0.200px;">Web</span>
<span class="t" style="left:431.50px;top:36.00px;font-size:14.667px;color:#3d3d3d;letter-spacing:0.314px;">Personal</span>
<span class="t" style="left:506.20px;top:36.00px;font-size:14.667px;color:#3d3d3d;letter-spacing:0.200px;">Sistema</span>
<span class="t" style="left:577.40px;top:36.00px;font-size:14.667px;color:#3d3d3d;letter-spacing:-0.043px;">Ventanas</span>
<span class="t" style="left:655.20px;top:36.00px;font-size:14.667px;color:#3d3d3d;letter-spacing:0.138px;">Ventana Activa</span>
<span class="t" style="left:771.10px;top:36.00px;font-size:14.667px;color:#3d3d3d;letter-spacing:0.640px;">Window</span>
<span class="t" style="left:324.40px;top:69.00px;font-size:14.667px;color:#000;letter-spacing:-0.067px;">General</span>
<span class="t" style="left:14.80px;top:105.00px;font-size:14.667px;color:#2e2e2e;letter-spacing:-0.225px;font-weight:bold;">Libros Fierro B2B</span>
<span class="t" style="left:10.10px;top:146.00px;font-size:14.0px;color:#3d3d3d;letter-spacing:0.033px;">ISBN</span>
<span class="t" style="left:11.10px;top:186.00px;font-size:14.667px;color:#3d3d3d;letter-spacing:0.073px;">Tipo de búsqueda</span>
<span class="t" style="left:10.10px;top:226.00px;font-size:14.667px;color:#3d3d3d;letter-spacing:0.554px;">Disponibilidad</span>
<span class="t" style="left:148.20px;top:186.00px;font-size:14.667px;color:#3d3d3d;letter-spacing:0.078px;">Fierro B2B</span>
<span class="t" style="left:145.40px;top:228.00px;font-size:14.667px;color:#000;letter-spacing:0.278px;">Disponible/En stock</span>
<span class="t" style="left:918.60px;top:146.00px;font-size:14.667px;color:#3d3d3d;letter-spacing:0.340px;">Título</span>
<span class="t" style="left:917.60px;top:186.00px;font-size:14.667px;color:#3d3d3d;letter-spacing:0.787px;">Editorial</span>
<span class="t" style="left:917.60px;top:226.00px;font-size:14.667px;color:#3d3d3d;letter-spacing:-0.033px;">Empresa</span>
<span class="t" style="left:995.20px;top:226.00px;font-size:14.667px;color:#3d3d3d;letter-spacing:0.390px;">Expone disponibilidad</span>
<span class="t" style="left:1203.80px;top:226.00px;font-size:14.667px;color:#1a1a1a;letter-spacing:0.460px;">Livriz</span>
<span class="t" style="left:1762.60px;top:143.00px;font-size:14.667px;color:#3d3d3d;letter-spacing:-0.180px;">Buscar</span>
<span class="t" style="left:11.90px;top:268.00px;font-size:14.667px;color:#000;letter-spacing:0.220px;">Título</span>
<span class="t" style="left:510.30px;top:268.00px;font-size:14.667px;color:#000;letter-spacing:0.087px;">ID Fierro</span>
<span class="t" style="left:610.40px;top:268.00px;font-size:14.0px;color:#000;letter-spacing:-0.080px;">ID B2B</span>
<span class="t" style="left:760.40px;top:268.00px;font-size:14.667px;color:#000;letter-spacing:0.300px;">Libros locales</span>
<span class="t" style="left:880.30px;top:268.00px;font-size:14.667px;color:#000;letter-spacing:0.825px;">Editorial</span>
<span class="t" style="left:1060.90px;top:268.00px;font-size:14.667px;color:#000;letter-spacing:0.253px;">Disponibilidad (empresa seleccionada)</span>
<span class="t" style="left:7.70px;top:291.00px;font-size:14.667px;color:#fff;letter-spacing:0.050px;">Cazatesoros</span>
<span class="t" style="left:607.20px;top:291.00px;font-size:14.667px;color:#fff;letter-spacing:-0.208px;">9788424652210</span>
<span class="t" style="left:757.40px;top:291.00px;font-size:14.667px;color:#fff;">0</span>
<span class="t" style="left:876.70px;top:291.00px;font-size:14.0px;color:#fff;letter-spacing:-0.213px;">LA GALERA</span>
<span class="t" style="left:1057.20px;top:291.00px;font-size:14.667px;color:#fff;letter-spacing:0.283px;">Disponible (Livriz)</span>
<span class="t" style="left:7.70px;top:314.00px;font-size:14.667px;color:#000;letter-spacing:-0.033px;">Cazatesoros 2 - Peligro en el Nilo</span>
<span class="t" style="left:607.20px;top:314.00px;font-size:14.667px;color:#000;letter-spacing:-0.208px;">9788424654528</span>
<span class="t" style="left:757.40px;top:314.00px;font-size:14.667px;color:#000;">0</span>
<span class="t" style="left:876.70px;top:314.00px;font-size:14.0px;color:#000;letter-spacing:-0.213px;">LA GALERA</span>
<span class="t" style="left:1057.20px;top:314.00px;font-size:14.667px;color:#000;letter-spacing:0.283px;">Disponible (Livriz)</span>
<span class="t" style="left:6.70px;top:337.00px;font-size:14.667px;color:#000;letter-spacing:-0.013px;">Megastar - El fincreícle diario de Fin Spencer 2</span>
<span class="t" style="left:607.20px;top:337.00px;font-size:14.667px;color:#000;letter-spacing:-0.208px;">9788424657772</span>
<span class="t" style="left:757.40px;top:337.00px;font-size:14.667px;color:#000;">0</span>
<span class="t" style="left:876.70px;top:337.00px;font-size:14.0px;color:#000;letter-spacing:-0.213px;">LA GALERA</span>
<span class="t" style="left:1057.20px;top:337.00px;font-size:14.667px;color:#000;letter-spacing:0.283px;">Disponible (Livriz)</span>
<span class="t" style="left:6.70px;top:360.00px;font-size:14.667px;color:#000;letter-spacing:0.077px;">Max y Mia y los piratas</span>
<span class="t" style="left:607.20px;top:360.00px;font-size:14.667px;color:#000;letter-spacing:-0.208px;">9788424656546</span>
<span class="t" style="left:757.40px;top:360.00px;font-size:14.667px;color:#000;">0</span>
<span class="t" style="left:876.70px;top:360.00px;font-size:14.0px;color:#000;letter-spacing:-0.213px;">LA GALERA</span>
<span class="t" style="left:1057.20px;top:360.00px;font-size:14.667px;color:#000;letter-spacing:0.283px;">Disponible (Livriz)</span>
<span class="t" style="left:6.70px;top:383.00px;font-size:14.667px;color:#000;letter-spacing:0.200px;">Los libros de A</span>
<span class="t" style="left:607.20px;top:383.00px;font-size:14.667px;color:#000;letter-spacing:-0.208px;">9788424649371</span>
<span class="t" style="left:757.40px;top:383.00px;font-size:14.667px;color:#000;">0</span>
<span class="t" style="left:876.70px;top:383.00px;font-size:14.0px;color:#000;letter-spacing:-0.213px;">LA GALERA</span>
<span class="t" style="left:1057.20px;top:383.00px;font-size:14.667px;color:#000;letter-spacing:0.283px;">Disponible (Livriz)</span>
<span class="t" style="left:6.70px;top:406.00px;font-size:14.667px;color:#000;letter-spacing:0.382px;">Por un botón</span>
<span class="t" style="left:607.20px;top:406.00px;font-size:14.667px;color:#000;letter-spacing:-0.208px;">9788424630386</span>
<span class="t" style="left:757.40px;top:406.00px;font-size:14.667px;color:#000;">0</span>
<span class="t" style="left:876.70px;top:406.00px;font-size:14.0px;color:#000;letter-spacing:-0.213px;">LA GALERA</span>
<span class="t" style="left:1057.20px;top:406.00px;font-size:14.667px;color:#000;letter-spacing:0.283px;">Disponible (Livriz)</span>
<span class="t" style="left:6.70px;top:429.00px;font-size:14.0px;color:#000;letter-spacing:-0.461px;">SUPERJUSTICIEROS DEL FÚTBOL 2. EL MISTERIOSO CASO DE LOS CAZAD...</span>
<span class="t" style="left:507.70px;top:429.00px;font-size:14.667px;color:#000;letter-spacing:-0.460px;">262096</span>
<span class="t" style="left:607.20px;top:429.00px;font-size:14.667px;color:#000;letter-spacing:-0.208px;">9788424660819</span>
<span class="t" style="left:757.40px;top:429.00px;font-size:14.667px;color:#000;">1</span>
<span class="t" style="left:876.70px;top:429.00px;font-size:14.0px;color:#000;letter-spacing:-0.213px;">LA GALERA</span>
<span class="t" style="left:1057.20px;top:429.00px;font-size:14.667px;color:#000;letter-spacing:0.283px;">Disponible (Livriz)</span>
<span class="t" style="left:6.70px;top:452.00px;font-size:14.0px;color:#000;letter-spacing:-0.189px;">LA RATITA PRESUMIDA</span>
<span class="t" style="left:507.70px;top:452.00px;font-size:14.667px;color:#000;letter-spacing:-0.460px;">284625</span>
<span class="t" style="left:607.20px;top:452.00px;font-size:14.667px;color:#000;letter-spacing:-0.208px;">9788424667269</span>
<span class="t" style="left:757.40px;top:452.00px;font-size:14.667px;color:#000;">1</span>
<span class="t" style="left:876.70px;top:452.00px;font-size:14.0px;color:#000;letter-spacing:-0.213px;">LA GALERA</span>
<span class="t" style="left:1057.20px;top:452.00px;font-size:14.667px;color:#000;letter-spacing:0.283px;">Disponible (Livriz)</span>
<span class="t" style="left:6.70px;top:475.00px;font-size:14.0px;color:#000;letter-spacing:-0.631px;">DIENTES BESTIALES</span>
<span class="t" style="left:507.70px;top:475.00px;font-size:14.667px;color:#000;letter-spacing:-0.460px;">286863</span>
<span class="t" style="left:607.20px;top:475.00px;font-size:14.667px;color:#000;letter-spacing:-0.208px;">9788424665579</span>
<span class="t" style="left:757.40px;top:475.00px;font-size:14.667px;color:#000;">1</span>
<span class="t" style="left:876.70px;top:475.00px;font-size:14.0px;color:#000;letter-spacing:-0.213px;">LA GALERA</span>
<span class="t" style="left:1057.20px;top:475.00px;font-size:14.667px;color:#000;letter-spacing:0.283px;">Disponible (Livriz)</span>
<span class="t" style="left:7.70px;top:498.00px;font-size:14.0px;color:#000;letter-spacing:-0.250px;">48 LABERINTOS ALREDEDOR DEL MUNDO</span>
<span class="t" style="left:507.70px;top:498.00px;font-size:14.667px;color:#000;letter-spacing:-0.460px;">253385</span>
<span class="t" style="left:607.20px;top:498.00px;font-size:14.667px;color:#000;letter-spacing:-0.208px;">9782733850176</span>
<span class="t" style="left:757.40px;top:498.00px;font-size:14.667px;color:#000;">1</span>
<span class="t" style="left:876.70px;top:498.00px;font-size:14.0px;color:#000;letter-spacing:-0.185px;">ÉDITIONS AUZOU</span>
<span class="t" style="left:1057.20px;top:498.00px;font-size:14.667px;color:#000;letter-spacing:0.283px;">Disponible (Livriz)</span>
<span class="t" style="left:6.70px;top:521.00px;font-size:14.0px;color:#000;letter-spacing:-0.079px;">MI MALETITA PARA APRENDER</span>
<span class="t" style="left:507.70px;top:521.00px;font-size:14.667px;color:#000;letter-spacing:-0.460px;">252875</span>
<span class="t" style="left:607.20px;top:521.00px;font-size:14.667px;color:#000;letter-spacing:-0.208px;">9782733850251</span>
<span class="t" style="left:757.40px;top:521.00px;font-size:14.667px;color:#000;">1</span>
<span class="t" style="left:876.70px;top:521.00px;font-size:14.0px;color:#000;letter-spacing:-0.185px;">ÉDITIONS AUZOU</span>
<span class="t" style="left:1057.20px;top:521.00px;font-size:14.667px;color:#000;letter-spacing:0.283px;">Disponible (Livriz)</span>
<span class="t" style="left:6.70px;top:544.00px;font-size:14.0px;color:#000;letter-spacing:-0.342px;">BUSCA Y ENCUENTRA PARA LOS MAS PEQUEÑOS</span>
<span class="t" style="left:507.70px;top:544.00px;font-size:14.667px;color:#000;letter-spacing:-0.460px;">253388</span>
<span class="t" style="left:607.20px;top:544.00px;font-size:14.667px;color:#000;letter-spacing:-0.208px;">9782733850190</span>
<span class="t" style="left:757.40px;top:544.00px;font-size:14.667px;color:#000;">1</span>
<span class="t" style="left:876.70px;top:544.00px;font-size:14.0px;color:#000;letter-spacing:-0.185px;">ÉDITIONS AUZOU</span>
<span class="t" style="left:1057.20px;top:544.00px;font-size:14.667px;color:#000;letter-spacing:0.283px;">Disponible (Livriz)</span>
<span class="t" style="left:31.10px;top:589.00px;font-size:20px;color:#fff;font-weight:bold;">Cazatesoros</span>
<span class="t" style="left:36.60px;top:679.00px;font-size:16px;color:#212529;font-weight:bold;">Ubicación</span>
<span class="t" style="left:284.70px;top:679.00px;font-size:16px;color:#212529;font-weight:bold;">Modo</span>
<span class="t" style="left:471.40px;top:679.00px;font-size:16px;color:#212529;font-weight:bold;">Stock</span>
<span class="t" style="left:557.90px;top:679.00px;font-size:16px;color:#212529;font-weight:bold;">Días</span>
<span class="t" style="left:644.70px;top:679.00px;font-size:16px;color:#212529;font-weight:bold;">Disponibilidad</span>
<span class="t" style="left:893.60px;top:679.00px;font-size:16px;color:#212529;font-weight:bold;">Condición</span>
<span class="t" style="left:1016.50px;top:679.00px;font-size:16px;color:#212529;font-weight:bold;">Pedidos</span>
<span class="t" style="left:37.60px;top:729.00px;font-size:16px;color:#212529;font-weight:bold;">Librum</span>
<span class="t" style="left:37.60px;top:753.00px;font-size:16px;color:#6c757d;">Principal</span>
<span class="t" style="left:284.70px;top:729.00px;font-size:14.25px;color:#6c757d;">Firme</span>
<span class="t" style="left:285.10px;top:753.00px;font-size:14.25px;color:#6c757d;">Consignación</span>
<span class="t" style="left:470.50px;top:729.00px;font-size:14.25px;color:#6c757d;">No</span>
<span class="t" style="left:470.50px;top:753.00px;font-size:14.25px;color:#6c757d;">informado</span>
<span class="t" style="left:912.70px;top:759.00px;font-size:14.25px;color:#6c757d;">Proveedor</span>
<span class="t" style="left:1106.80px;top:732.00px;font-size:14px;color:#fff;font-style:italic;">Pedir</span>
<span class="t" style="left:37.60px;top:815.00px;font-size:16px;color:#212529;font-weight:bold;">Livriz</span>
<span class="t" style="left:37.60px;top:839.00px;font-size:16px;color:#6c757d;">Livriz</span>
<span class="t" style="left:284.70px;top:815.00px;font-size:14.25px;color:#6c757d;">Firme</span>
<span class="t" style="left:285.10px;top:839.00px;font-size:14.25px;color:#6c757d;">Consignación</span>
<span class="t" style="left:470.50px;top:815.00px;font-size:14.25px;color:#6c757d;">No</span>
<span class="t" style="left:470.50px;top:839.00px;font-size:14.25px;color:#6c757d;">informado</span>
<span class="t" style="left:912.70px;top:845.00px;font-size:14.25px;color:#6c757d;">Proveedor</span>
<span class="t" style="left:1106.80px;top:818.00px;font-size:14px;color:#fff;font-style:italic;">Pedir</span>
<span class="t" style="left:557.90px;top:729.00px;font-size:14.25px;color:#6c757d;">No</span>
<span class="t" style="left:557.90px;top:753.00px;font-size:14.25px;color:#6c757d;">informado</span>
<span class="t" style="left:607.70px;top:815.00px;font-size:16px;color:#212529;">30</span>
<span class="t" style="left:939.50px;top:729.00px;font-size:16px;color:#212529;font-weight:bold;">35,00 %</span>
<span class="t" style="left:939.50px;top:815.00px;font-size:16px;color:#212529;font-weight:bold;">30,00 %</span>
<span class="t" style="left:650.70px;top:730.00px;font-size:11.5px;color:#fff;font-weight:bold;">No disponible</span>
<span class="t" style="left:650.70px;top:816.00px;font-size:11.5px;color:#fff;font-weight:bold;">Disponible</span>
<span class="t" style="left:645.70px;top:755.00px;font-size:12.95px;color:#6c757d;">Actualizado el 04-11-2024 15:33:04</span>
<span class="t" style="left:645.70px;top:841.00px;font-size:12.95px;color:#6c757d;">Actualizado el 26-07-2025 13:52:36</span>
<span class="t" style="left:15.80px;top:938.00px;font-size:20px;color:#212529;font-weight:bold;">Precios publicados</span>
<span class="t" style="left:1189.20px;top:602.00px;font-size:23px;color:#ff9900;font-weight:bold;-webkit-text-stroke:0.5px #ff9900;">B</span>
<span class="t" style="left:1212.00px;top:602.00px;font-size:23px;color:#ffff00;font-weight:bold;-webkit-text-stroke:0.5px #ffff00;">2</span>
<span class="t" style="left:1231.10px;top:602.00px;font-size:23px;color:#0b4f94;font-weight:bold;-webkit-text-stroke:0.5px #0b4f94;">B</span>
<span class="t" style="left:1350.60px;top:602.00px;font-size:23px;color:#0b4f94;font-weight:bold;-webkit-text-stroke:0.45px #0b4f94;">Fierro</span>
<span class="t" style="left:1530.30px;top:578.00px;font-size:14.667px;color:#3d3d3d;letter-spacing:0.675px;">Total</span>
<span class="t" style="left:1539.20px;top:609.00px;font-size:14.667px;color:#000;letter-spacing:-0.733px;">1000</span>
<span class="t" style="left:1529.80px;top:641.00px;font-size:14.667px;color:#3d3d3d;letter-spacing:0.340px;">Vistas</span>
<span class="t" style="left:1538.60px;top:672.00px;font-size:14.667px;color:#000;letter-spacing:-0.100px;">General</span>
<div class="a" style="left:0;top:0;width:1.4px;height:965px;background:#2e2f2f"></div>
</div></body></html>
